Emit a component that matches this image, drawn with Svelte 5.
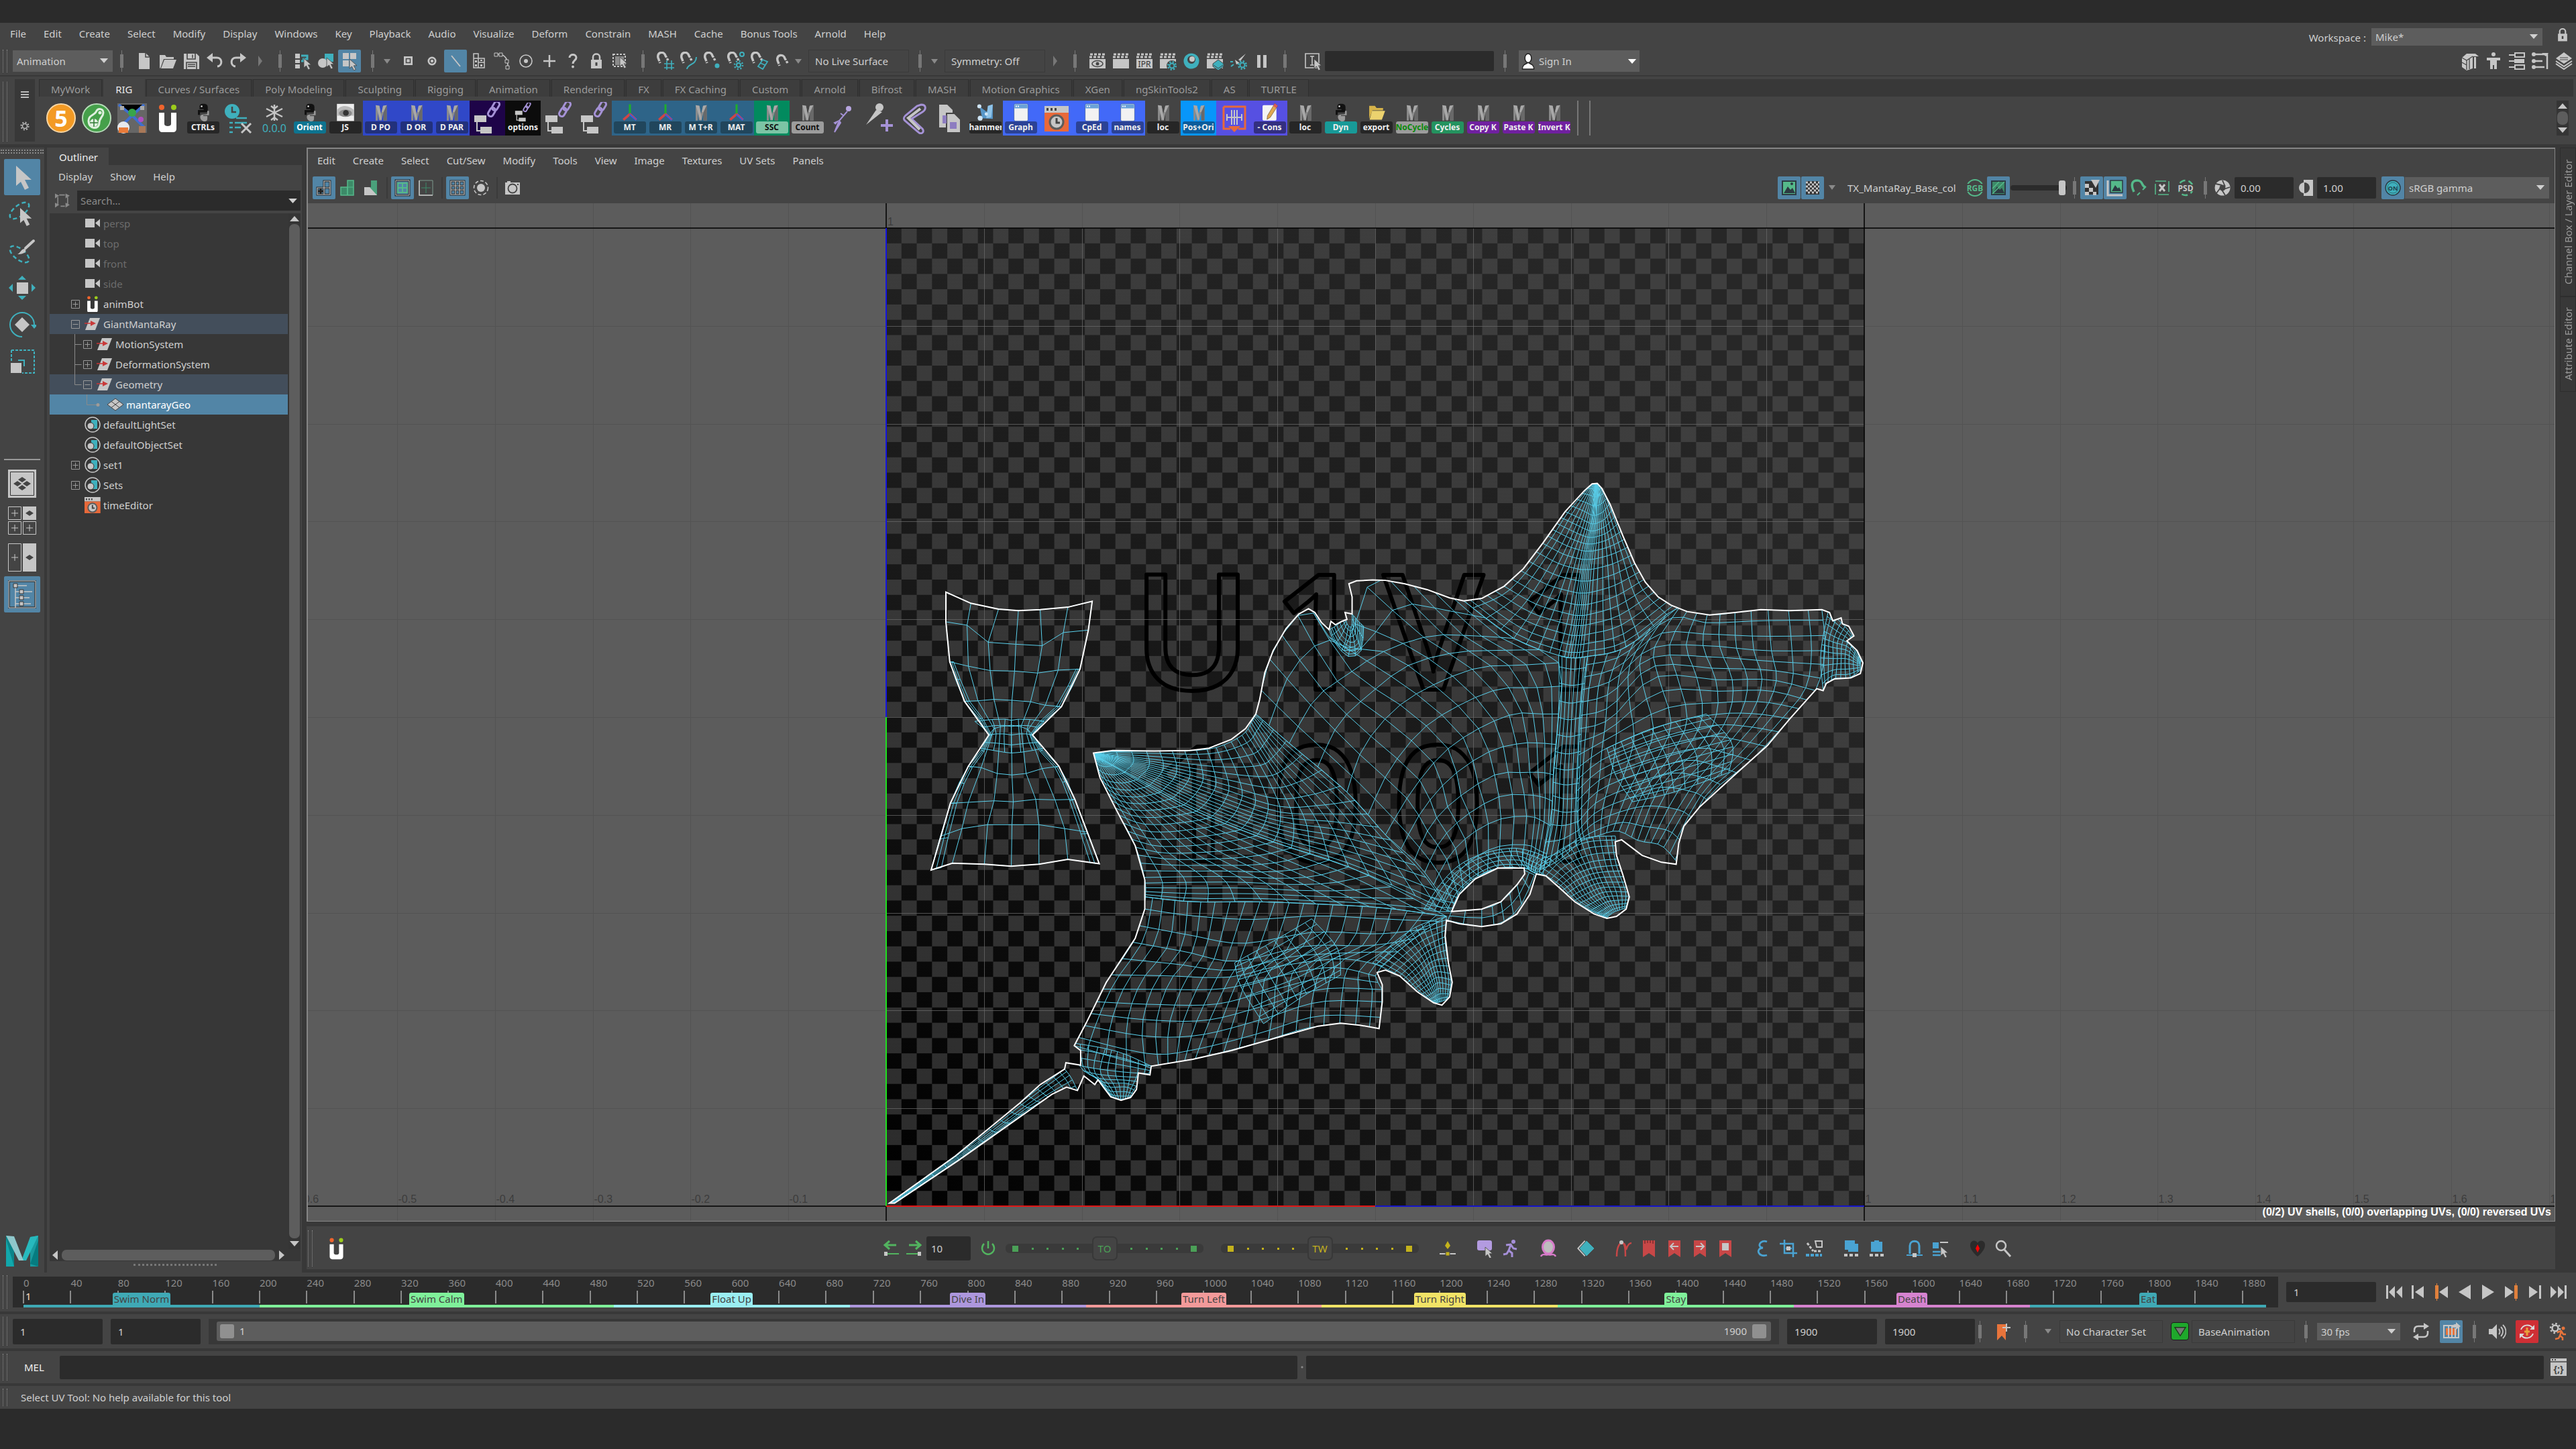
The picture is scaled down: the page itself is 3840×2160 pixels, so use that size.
<script>
  const W = "#c6c6c6";
  const T = "#3fb0bd";
  const G = "#55b98a";

  // shared bits of the icon set, all drawn on a 28 x 28 box
  const cursor = (x, y) => `<path transform="translate(${x} ${y})" d="M0 0v14l3.500-3 3 6 2.800-1.400-3-5.800H11z" fill="${W}" stroke="#444" stroke-width=".8"/>`;
  const magnet = `<path d="M6 17 3 9C1 0 12-1 14 6l4 7" fill="none" stroke="${W}" stroke-width="3.500"/><path d="M3.500 15.500l5-1.800M13.500 10.500l4.500-2" stroke="#444" stroke-width="1.500"/>`;
  const clapper = `<path d="M2 11h24v14H2z" fill="${W}"/><path d="M2 8h24M3 4h23" stroke="${W}" stroke-width="3" stroke-dasharray="4 2"/>`;
  const gear = (x, y) => `<g transform="translate(${x} ${y})" fill="none" stroke="${T}"><circle r="3.500" stroke-width="2"/><circle r="5.800" stroke-width="2.400" stroke-dasharray="2.300 2.250"/></g>`;
  const bolt = `<path d="M5 2h18v25l-9-6-9 6z" fill="#c84747"/>`;
  const film = `<path d="M3 5h22v18H3z" fill="none" stroke="${W}" stroke-width="2"/>`;

  const icons = {
    newScene: `<path d="M6 2h10l6 6v18H6z" fill="${W}"/><path d="M16 2v6h6" fill="none" stroke="#444" stroke-width="1.500"/>`,
    open: `<path d="M2 24V5h8l2 3h11v3H8L3 25z" fill="${W}"/><path d="M9 12h18l-5 13H4z" fill="${W}"/>`,
    save: `<path d="M3 3h19l4 4v19H3z" fill="${W}"/><path d="M8 3v8h12V3M7 26V16h15v10" fill="none" stroke="#444" stroke-width="1.600"/><path d="M9 19h11M9 22h11M16 4.500v5" stroke="#444" stroke-width="1.500"/>`,
    undo: `<path d="M8 9h9c9 0 9 12 1 13" fill="none" stroke="${W}" stroke-width="3"/><path d="M2 9l9-7v14z" fill="${W}"/>`,
    redo: `<path d="M20 9h-9c-9 0-9 12-1 13" fill="none" stroke="${W}" stroke-width="3"/><path d="M26 9l-9-7v14z" fill="${W}"/>`,
    selHier: `<path d="M3 3h7v7H3zM3 12h7v5H3zM3 19h7v6H3z" fill="${W}"/><path d="M12 6h9v5h-7M12 14h5" fill="none" stroke="${T}" stroke-width="3"/>${cursor(16, 10)}`,
    selObj: `<path d="M12 3h13v12H12z" fill="${T}"/><circle cx="9" cy="17" r="7" fill="${W}"/>${cursor(15, 9)}`,
    selComp: `<path d="M4 2h9v9H4zM15 2h9v9h-9zM4 13h9v9H4z" fill="${W}"/>${cursor(14, 11)}`,
    maskPoint: `<path d="M7 7h13v13H7z" fill="${W}"/><path d="M10.500 10.500h6v6h-6z" fill="none" stroke="#444" stroke-width="1.500"/>`,
    maskParm: `<circle cx="14" cy="14" r="6.500" fill="${W}"/><circle cx="14" cy="14" r="3" fill="${W}" stroke="#444" stroke-width="1.500"/>`,
    maskLine: `<path d="M8 6l13 16" stroke="${W}" stroke-width="1.800"/>`,
    maskFace: `<path d="M6 3h7v21H6zM6 10h16v14H6zM13 16h9" fill="none" stroke="${W}" stroke-width="1.500"/><path d="M8 13h3v3H8zM16 12h3v2h-3zM8 19h3v3H8zM16 19h3v3h-3z" fill="${W}"/>`,
    maskHull: `<path d="M5 4h5c8 1 12 8 12 18" fill="none" stroke="${W}" stroke-width="1.600"/><path d="M2 2h5v5H2zM9 2h5v5H9zM18 12h5v5h-5zM19 21h5v5h-5z" fill="#444" stroke="${W}"/>`,
    maskPivot: `<circle cx="14" cy="14" r="9" fill="none" stroke="${W}" stroke-width="1.600"/><circle cx="14" cy="14" r="3" fill="${W}"/>`,
    maskPlus: `<path d="M14 5v18M5 14h18" stroke="${W}" stroke-width="2.500"/>`,
    maskHelp: `<path d="M9 9c0-6 10-6 10 0 0 4-5 4-5 9" fill="none" stroke="${W}" stroke-width="3"/><circle cx="14" cy="22.500" r="1.900" fill="${W}"/>`,
    lock: `<path d="M6 12h16v13H6z" fill="${W}"/><path d="M9 13V8c0-6 10-6 10 0v5" fill="none" stroke="${W}" stroke-width="2.500"/><path d="M14 16v5" stroke="#444" stroke-width="3"/>`,
    highlight: `<path d="M4 4h18v18H4z" fill="none" stroke="${W}" stroke-width="2" stroke-dasharray="3 2"/><path d="M7 7h13v13H7z" fill="#8a8a8a"/>${cursor(14, 8)}`,
    snapGrid: magnet + `<path d="M12 18h15M12 24h15M16 13v14M23 13v14" stroke="${T}" stroke-width="1.600"/>`,
    snapCurve: magnet + `<path d="M11 26c1-8 14-6 14-18" fill="none" stroke="${T}" stroke-width="2"/>`,
    snapPoint: magnet + `<circle cx="21" cy="21" r="3.500" fill="${T}"/>`,
    snapCenter: magnet + `<circle cx="23" cy="4" r="3" fill="none" stroke="${T}" stroke-width="2"/><circle cx="18" cy="20" r="3" fill="none" stroke="${T}" stroke-width="2"/><circle cx="18" cy="20" r="6" fill="none" stroke="${T}" stroke-width="2.500" stroke-dasharray="2 2.700"/>`,
    snapPlane: magnet + `<path d="M12 22l7-10 7 3-7 11zM15.500 17l7 3" fill="none" stroke="${T}" stroke-width="1.800"/>`,
    snapLive: `<g transform="translate(3 4)">${magnet}</g>`,
    render: clapper + `<ellipse cx="14" cy="18" rx="8" ry="4.500" fill="none" stroke="#444" stroke-width="1.500"/><circle cx="14" cy="18" r="2.500" fill="#444"/>`,
    renderSeq: clapper,
    ipr: clapper + `<text x="14" y="23" text-anchor="middle" font-size="12" fill="#333">IPR</text>`,
    renderGear: clapper + `<circle cx="20" cy="21" r="8" fill="#444"/>` + gear(20, 21),
    hyper: `<circle cx="14" cy="14" r="11.500" fill="${T}"/><circle cx="14" cy="12" r="6" fill="#444"/><circle cx="15" cy="11" r="4" fill="${W}"/>`,
    renderLayer: clapper + `<path d="M19 12l8 6v4l-8 6-8-6v-4z" fill="${T}" stroke="#444"/><path d="M12 20l7 5 7-5" fill="none" stroke="#444"/>`,
    light: `<path d="M25 3l-11 9 3 2zM9 12l7 5-5 2z" fill="${W}"/><path d="M2 15h4M3 22l4-3" stroke="${T}" stroke-width="2"/>` + gear(20, 20),
    pause: `<path d="M7 5h5v19H7zM16 5h5v19h-5z" fill="${W}"/>`,
    rename: `<path d="M3 3h20v21H3z" fill="none" stroke="${W}" stroke-width="1.600"/><path d="M10 7h6M13 7v13M10 20h6" stroke="${W}" stroke-width="1.600"/>${cursor(16, 11)}`,
    cube: `<path d="M2 9l7-6h13l5 4h-9v18l-9 3-7-5z" fill="${W}"/><path d="M2 9l7 4 9-6M9 13v14M13 11v15M2 16l7 4" stroke="#444" stroke-width="1.300" fill="none"/><path d="M20 8h3v17h-3z" fill="${W}"/>`,
    human: `<circle cx="14" cy="4" r="3" fill="${W}"/><path d="M4 9h20v4h-5v13h-4v-6h-2v6H9V13H4z" fill="${W}"/>`,
    chan: `<path d="M2 5h8M2 14h8M2 23h8" stroke="${W}" stroke-width="2"/><path d="M11 2h14v6H11zM11 20h14v6H11z" fill="none" stroke="${W}" stroke-width="2"/><path d="M10 11h15v6H10z" fill="${W}"/>`,
    attr: `<path d="M2 4h22v22M5 14h12M5 23h15" stroke="${W}" stroke-width="2.500" fill="none"/><circle cx="4" cy="4" r="3" fill="${W}"/><circle cx="4" cy="14" r="3" fill="${W}"/><circle cx="4" cy="23" r="3" fill="${W}"/><path d="M16 2h10l-4 5z" fill="${W}"/>`,
    layers: `<path d="M14 1l12 9-12 8L2 10z" fill="${W}"/><path d="M2 14l12 8 12-8M2 18l12 8 12-8" fill="none" stroke="${W}" stroke-width="2"/><path d="M8 9h12M8 12h12" stroke="#444"/>`,

    uvWire: `<path d="M4 14h10v10H4zM14 4h9v20h-9zM14 14h9M9 14v10M4 19h10" fill="none" stroke="#222" stroke-width="3"/><path d="M4 14h10v10H4zM14 4h9v20h-9zM14 14h9" fill="none" stroke="${W}" stroke-width="1.200"/>`,
    uvShade: `<path d="M4 13h10v12H4zM14 3h9v22h-9z" fill="#3d8a68" stroke="${G}" stroke-width="1.500"/><path d="M14 13h9M14 13v12" stroke="${G}"/>`,
    uvDist: `<path d="M4 13h10V3h9v22H4z" fill="#4aa07b"/><path d="M4 13h8l11 12H4z" fill="${W}"/>`,
    uvIso: `<path d="M4 3h20v22H4z" fill="none" stroke="#222" stroke-width="3"/><path d="M4 3h20v22H4z" fill="none" stroke="${W}"/><path d="M7 7h14v14H7zM14 7v14M7 14h14" fill="none" stroke="${G}" stroke-width="2"/>`,
    uvDim: `<path d="M4 3h20v22H4z" fill="none" stroke="#7d9a8e"/><path d="M4 3v22h20" fill="none" stroke="${W}" stroke-width="1.500"/><path d="M14 6v16M7 14h14" stroke="#3d8a68"/>`,
    uvGrid: `<path d="M4 4h20v20H4zM11 4v20M17 4v20M4 11h20M4 17h20" fill="none" stroke="#222" stroke-width="3"/><path d="M4 4h20v20H4zM11 4v20M17 4v20M4 11h20M4 17h20" fill="none" stroke="${W}" stroke-width="1.200"/>`,
    uvIsolate: `<circle cx="14" cy="14" r="10.500" fill="none" stroke="${W}" stroke-width="1.600" stroke-dasharray="5 3"/><circle cx="14" cy="14" r="6" fill="${W}"/>`,
    camera: `<path d="M3 6h3V4h5v2h14v18H3z" fill="${W}"/><circle cx="14" cy="15" r="6.500" fill="none" stroke="#444" stroke-width="1.800"/><path d="M21 9h2" stroke="#444" stroke-width="2"/>`,
    image: `<path d="M4 4h20v20H4z" fill="${G}" stroke="#2c3a42" stroke-width="2"/><path d="M6 22l6-10 4 5 3-3 4 8z" fill="#2c3a42"/><circle cx="18" cy="8" r="2" fill="#2c3a42"/>`,
    checker: `<path d="M4 4h20v20H4z" fill="#333"/><path d="M4 6h20M4 12h20M4 18h20" stroke="${W}" stroke-width="3" stroke-dasharray="3 3"/><path d="M7 9h17M7 15h17M7 21h17" stroke="${W}" stroke-width="3" stroke-dasharray="3 3"/>`,
    rgb: `<circle cx="14" cy="14" r="12" fill="none" stroke="${G}" stroke-width="2"/><path d="M0 8h28v12H0z" fill="#444"/><text x="14" y="18.500" text-anchor="middle" font-size="12" font-weight="700" fill="${G}">RGB</text>`,
    imageDim: `<path d="M4 4h20v20H4z" fill="#3d8a68" stroke="#2c3a42" stroke-width="2"/><path d="M6 22l6-10 4 5 3-3 4 8z" fill="#2c3a42"/><path d="M5 23L23 5M5 15L15 5" stroke="${G}" stroke-width="1.500"/>`,
    pixelSnap: `<path d="M4 4h20v20H4z" fill="#333"/><path d="M4 8h6v6H4zM10 14h6v6h-6zM4 20h6v5H4zM16 20h5v5h-5zM13 2h13l-6 12z" fill="${W}"/>`,
    imageFrame: `<path d="M3 3v22h22" fill="none" stroke="${W}" stroke-width="3"/><path d="M7 3h18v18H7z" fill="${G}" stroke="#2c3a42" stroke-width="1.500"/><path d="M9 19l5-9 4 5 2-2 3 6z" fill="#2c3a42"/>`,
    uvMagnet: `<path d="M7 20C2 9 4 3 12 3c9 0 6 9 12 10" fill="none" stroke="${G}" stroke-width="3.500"/><path d="M12 25l4-4M20 17l5-5" stroke="${G}" stroke-width="2"/>`,
    bake: `<path d="M4 4h20v20H4z" fill="none" stroke="${G}" stroke-width="1.600" stroke-dasharray="16 4"/><path d="M10 9l8 10M18 9l-8 10" stroke="${W}" stroke-width="3"/>`,
    psd: `<circle cx="14" cy="14" r="11" fill="none" stroke="${G}" stroke-width="2.500" stroke-dasharray="9 5"/><path d="M0 9h28v10H0z" fill="#444"/><text x="14" y="18.500" text-anchor="middle" font-size="12" font-weight="700" fill="${W}">PSD</text>`,
    aperture: `<circle cx="14" cy="14" r="8" fill="none" stroke="${W}" stroke-width="7"/><path d="M14 3l4 9M25 13l-9 3M18 25l-5-8M5 22l6-8M4 8l9 2" stroke="#444" stroke-width="1.800"/>`,
    contrast: `<path d="M12 2h14v24H12z" fill="${W}"/><path d="M13 6a8 8 0 0 0 0 16z" fill="${W}"/><path d="M13 6a8 8 0 0 1 0 16z" fill="#444"/>`,
    on: `<circle cx="14" cy="14" r="11" fill="${T}" stroke="#2c3a42" stroke-width="1.500"/><circle cx="14" cy="14" r="8" fill="none" stroke="#2c6f78"/><text x="14" y="17.500" text-anchor="middle" font-size="9" font-weight="700" fill="#21434c">ON</text>`,

    keyPrev: `<path d="M5 9h17M12 3L5 9l7 6" fill="none" stroke="#52b45f" stroke-width="3"/><path d="M9 22h17" stroke="#52b45f" stroke-width="2"/><path d="M4 19h5v6H4z" fill="${W}"/>`,
    keyNext: `<path d="M23 9H6M16 3l7 6-7 6" fill="none" stroke="#52b45f" stroke-width="3"/><path d="M2 22h17" stroke="#52b45f" stroke-width="2"/><path d="M19 19h5v6h-5z" fill="${W}"/>`,
    power: `<path d="M8 7a9 9 0 1 0 12 0M14 3v11" fill="none" stroke="#52b45f" stroke-width="2.500"/>`,
    tween: `<path d="M14 3l4 7-4 5-4-5z" fill="#c4b21c"/><path d="M2 22h24" stroke="${W}" stroke-width="2"/><path d="M11 19h6v6h-6z" fill="#c4b21c" stroke="#444"/>`,
    selectSet: `<rect x="2" y="2" width="22" height="15" rx="3" fill="#b39be0"/>${cursor(14, 12)}`,
    runner: `<circle cx="18" cy="4" r="3" fill="#a58fd8"/><path d="M7 9l7-1 4 6 5 1M14 9l-3 8 5 4v6M11 17l-3 5-5 1" fill="none" stroke="#a58fd8" stroke-width="3"/>`,
    mirror: `<ellipse cx="14" cy="12" rx="8.500" ry="10" fill="#bdbdbd" stroke="#d77bc9" stroke-width="3"/><path d="M3 26c3-6 8-1 11-3 3 2 8-3 11 3" fill="none" stroke="#d77bc9" stroke-width="2.500"/>`,
    diamond: `<path d="M12 2l11 12-11 12L1 14z" fill="${W}"/><path d="M15 2l12 12-12 12L4 14z" fill="${T}" stroke="#444"/>`,
    curve: `<path d="M4 26C4 12 8 6 12 6s5 8 5 20M12 6c5 0 5 5 6 10 2-7 4-10 8-10" fill="none" stroke="#c84747" stroke-width="2.500"/><circle cx="11" cy="5" r="3" fill="${W}"/>`,
    markAll: bolt + `<path d="M8 2v5M12 2v4M16 2v4M20 2v5" stroke="#7c2c2c" stroke-width="1.500"/>`,
    markPrev: bolt + `<path d="M20 11H8M13 6l-5 5 5 5" fill="none" stroke="${W}" stroke-width="2"/>`,
    markNext: bolt + `<path d="M8 11h12M15 6l5 5-5 5" fill="none" stroke="${W}" stroke-width="2"/>`,
    markBox: bolt + `<path d="M9 6h10v11H9z" fill="${W}"/>`,
    epsilon: `<path d="M20 4C10 0 4 12 14 13 2 14 7 28 20 24" fill="none" stroke="#4aa3d2" stroke-width="2.800"/>`,
    crop: `<path d="M8 1v20h19M1 7h20v20M10 14h9" fill="none" stroke="#4aa3d2" stroke-width="2.500"/><path d="M11 11h6v6h-6z" fill="${W}"/>`,
    nudge: `<path d="M2 24h24" stroke="#4aa3d2" stroke-width="4" stroke-dasharray="5 2"/><path d="M14 18h12M4 6l9 12" stroke="${W}" stroke-width="3" stroke-dasharray="4 2"/><path d="M16 3h10v9h-8z" fill="none" stroke="${W}" stroke-width="2"/>`,
    copy: `<path d="M4 2h15v5h5v12H9v-3H4z" fill="#4aa3d2"/><path d="M3 24h23" stroke="${W}" stroke-width="4" stroke-dasharray="5 3"/>`,
    paste: `<path d="M5 4h5V2h7v2h5v15H5z" fill="#4aa3d2"/><path d="M3 24h23" stroke="${W}" stroke-width="4" stroke-dasharray="5 3"/>`,
    arch: `<path d="M7 22V10c0-9 14-9 14 0v12" fill="none" stroke="#4aa3d2" stroke-width="3"/><path d="M2 24h24" stroke="#4aa3d2" stroke-width="2"/><path d="M11 21h6v6h-6z" fill="${W}"/>`,
    picker: `<path d="M3 5h9v9H3z" fill="#4aa3d2"/><path d="M3 19h12M3 24h12" stroke="#4aa3d2" stroke-width="2.500"/><path d="M14 5h12" stroke="${W}" stroke-width="2"/>${cursor(15, 11)}`,
    heart: `<path d="M14 26C2 16 2 9 4 5c3-4 8-3 10 1 2-4 7-5 10-1 2 4 2 11-10 21z" fill="#2b2b2b"/><path d="M14 8l3 6-3 6-3-6z" fill="#f00"/>`,
    search: `<circle cx="11" cy="10" r="7" fill="none" stroke="${W}" stroke-width="2.500"/><path d="M16 16l9 10" stroke="${W}" stroke-width="3"/>`,

    goStart: `<path d="M2 4h3v20H2z" fill="${W}"/><path d="M15 5v18L6 14zM26 5v18l-9-9z" fill="${W}"/>`,
    stepBack: `<path d="M5 4h3v20H5z" fill="${W}"/><path d="M23 5v18l-13-9z" fill="${W}"/>`,
    keyBack: `<path d="M5 4h5v20H5zM7 1h1v26H7z" fill="#e0803c"/><path d="M24 5v18l-13-9z" fill="${W}"/>`,
    playBack: `<path d="M23 3v22L5 14z" fill="${W}"/>`,
    play: `<path d="M5 3v22l18-11z" fill="${W}"/>`,
    keyFwd: `<path d="M18 4h5v20h-5zM20 1h1v26h-1z" fill="#e0803c"/><path d="M4 5v18l13-9z" fill="${W}"/>`,
    stepFwd: `<path d="M20 4h3v20h-3z" fill="${W}"/><path d="M5 5v18l13-9z" fill="${W}"/>`,
    goEnd: `<path d="M23 4h3v20h-3z" fill="${W}"/><path d="M2 5v18l9-9zM13 5v18l9-9z" fill="${W}"/>`,
    bookmark: `<path d="M6 3h13v24l-6-7-7 7z" fill="#e8743b"/><path d="M20 2v12M14 8h12" stroke="${W}" stroke-width="2"/>`,
    loop: `<path d="M4 15v-3c0-4 2-6 6-6h10M24 13v3c0 4-2 6-6 6H8" fill="none" stroke="${W}" stroke-width="2.500"/><path d="M18 1l8 5-8 5zM10 17l-8 5 8 5z" fill="${W}"/>`,
    cache: film + `<path d="M6 9h16v10H6z" fill="#e8743b"/><path d="M10 5v18M15 5v18M20 9v14" stroke="${W}" stroke-width="2"/><path d="M14 8c2-5 5-5 7-5V0l7 6-7 5V8z" fill="${W}"/>`,
    sound: `<path d="M2 10h5l7-7v22l-7-7H2z" fill="${W}"/><path d="M17 10c2 2 2 6 0 8M20 7c4 4 4 10 0 14M23 4c6 6 6 14 0 20" fill="none" stroke="${W}" stroke-width="1.800"/>`,
    autoKey: `<path d="M5 11a10 10 0 0 1 17-3M23 17a10 10 0 0 1-17 3" fill="none" stroke="#d9d9d9" stroke-width="2"/><path d="M25 4v7h-7zM3 24v-7h7z" fill="#d9d9d9"/><path d="M14 8v12M10 14h8" stroke="#e8a13b" stroke-width="3"/>`,
    prefs: `<circle cx="9" cy="9" r="4.500" fill="none" stroke="${W}" stroke-width="2.500"/><circle cx="9" cy="9" r="7" fill="none" stroke="${W}" stroke-width="2.500" stroke-dasharray="2.500 3"/><circle cx="21" cy="9" r="2.500" fill="#e8743b"/><path d="M12 15l6-2 3 5h4M18 14l-2 6 4 3v4M16 20l-2 4-5 1" fill="none" stroke="#e8743b" stroke-width="2.500"/>`,
    script: `<path d="M2 1h24v26H2z" fill="${W}"/><path d="M2 6h24" stroke="#444" stroke-width="1.500"/><path d="M4 3h2M8 3h2" stroke="#444" stroke-width="2"/><text x="14" y="22" text-anchor="middle" font-size="14" font-weight="700" fill="#444">&#123;;&#125;</text>`
  };

  // shelf artwork on a 48 x 48 box
  const mayaM = `<path d="M11 44V6l9 2 4 20 5-20 9-2v38h-8V24l-5 20-6-1-3-17v18z" fill="#8c8c8c"/><path d="M11 6l9 2 6 34-4 0zM38 6l-9 2-3 14 4 2z" fill="#a9a9a9"/><path d="M30 24l8-18v38h-8z" fill="#696969"/>`;
  const python = `<path d="M24 3c-8 0-9 3-9 8v5h10v2H11v12h5v-6h14c4 0 5-3 5-6v-7c0-5-3-8-11-8z" fill="#111"/><path d="M25 46c8 0 9-3 9-8v-5H24v-2h14V20h-4v7c-2 3-14 1-16 4-3 3-2 12 7 15z" fill="#9a9a9a"/><circle cx="20" cy="9" r="2" fill="#eee"/>`;
  const axis = `<path d="M24 28V4" stroke="#1fae2c" stroke-width="5"/><path d="M24 28L8 42" stroke="#d04545" stroke-width="6"/><path d="M24 28l16 14" stroke="#3b5be0" stroke-width="6"/><path d="M24 26l8 7 8 9" fill="none" stroke="#d04545" stroke-width="2"/>`;
  const node = `<path d="M4 20h18v10H4z" fill="${W}"/><path d="M8 30v13h8" fill="none" stroke="${W}" stroke-width="2"/><path d="M13 37h17v10H13z" fill="${W}"/><g fill="none" stroke="#a592d6" stroke-width="3"><rect x="-4" y="-7" width="8" height="14" rx="4" transform="translate(30 15) rotate(30)"/><rect x="-4" y="-7" width="8" height="14" rx="4" transform="translate(36 6) rotate(30)"/></g>`;
  const win = `<rect x="7" y="3" width="34" height="42" rx="3" fill="#f2f2f2" stroke="#274b8a"/><path d="M8 4h32v10H8z" fill="#6aa2d8"/><path d="M11 9h3M16 9h3" stroke="#fff" stroke-width="3"/>`;
  const editor = `<path d="M6 6h36v10H6z" fill="${W}"/><path d="M6 16h36v28H6z" fill="#e8693a"/><path d="M9 11h3M15 11h3M21 11h3" stroke="#444" stroke-width="4"/><circle cx="24" cy="30" r="10" fill="${W}" stroke="#5c5c5c" stroke-width="3"/><path d="M24 24v7h5" fill="none" stroke="#444" stroke-width="3"/>`;
  const animbot = `<path d="M11 16h8v17c0 4 10 4 10 0V16h8v24c0 3-2 5-5 5H16c-3 0-5-2-5-5z" fill="#fff"/><circle cx="15" cy="8" r="4" fill="#f0642d"/><circle cx="33" cy="8" r="4" fill="#9ccc1c"/>`;
  const art = {
    mayaM, python, axis, node, win, editor, animbot,
    five: `<circle cx="24" cy="24" r="21" fill="#f39a24" stroke="#f8d7a5" stroke-width="2"/><text x="24" y="37" text-anchor="middle" font-size="34" font-weight="700" fill="#fff">5</text>`,
    green: `<circle cx="24" cy="24" r="21" fill="#45a04a" stroke="#b7dcb9" stroke-width="2"/><path d="M12 28c0-8 8-8 11-13 3-7 11-5 11 1s-6 8-6 15c0 11-16 10-16-3z" fill="none" stroke="#dff0df" stroke-width="3"/><circle cx="20" cy="31" r="6" fill="#dff0df"/><path d="M14 31h12M20 25v12" stroke="#2f7a34" stroke-width="1.500"/><circle cx="29" cy="16" r="2.500" fill="#dff0df"/>`,
    people: `<path d="M2 2h44v44H2z" fill="#666"/><path d="M4 4l20 16L42 4M24 20L8 36M24 20l18 18" stroke="#3d6fd0" stroke-width="4"/><circle cx="24" cy="16" r="6" fill="#39a54a"/><circle cx="11" cy="38" r="9" fill="#e6e9ee"/><path d="M4 38h14v8H4z" fill="#e87b3a"/><path d="M34 36h10v10H34z" fill="#a87858"/><path d="M6 6h6v6H6zM36 6h6v6h-6z" fill="#aaa"/><circle cx="37" cy="26" r="4" fill="#b04fc0"/>`,
    clock: `<circle cx="14" cy="14" r="11" fill="${T}"/><path d="M14 7v8h6" stroke="#444" stroke-width="2.500" fill="none"/><path d="M20 24h16M10 31h5M18 31h18M10 38h5M18 38h9M10 45h5" stroke="${T}" stroke-width="2.500"/><path d="M28 32l14 14M42 32L28 46" stroke="${W}" stroke-width="3"/>`,
    freeze: `<path d="M24 4v24M12 10l24 12M36 10L12 22M19 6l5 4 5-4M19 27l5-4 5 4" stroke="${W}" stroke-width="2.500" fill="none"/><text x="24" y="45" text-anchor="middle" font-size="16" fill="${T}">0.0.0</text>`,
    eye: `<path d="M3 3h42v42H3z" fill="#eee"/><path d="M3 18c12-14 28-12 42 0v14H3z" fill="#bbb"/><ellipse cx="24" cy="26" rx="16" ry="9" fill="#8a8a8a"/><circle cx="25" cy="25" r="7" fill="#333"/>`,
    bone: `<circle cx="32" cy="10" r="4" fill="#b7a6e0"/><path d="M30 14L18 28l-7 3 2 2M17 30l-6 15 9-14-2-3M24 20l-4-3" fill="#a592d6" stroke="#a592d6" stroke-width="2"/>`,
    boneAdd: `<circle cx="25" cy="8" r="6" fill="${W}"/><path d="M20 12l9 3L5 34z" fill="${W}"/><path d="M36 26v18M27 35h18" stroke="#a592d6" stroke-width="4"/>`,
    joint: `<path d="M34 4c8 0 8 7 2 11L20 25l16 15c4 5-2 9-6 5L10 28c-3-3-2-5 1-8L28 6z" fill="none" stroke="#a592d6" stroke-width="3"/><path d="M33 10L15 24l17 17" fill="none" stroke="${W}" stroke-width="4"/>`,
    dup: `<path d="M8 4h12l8 8v26H8z" fill="${W}"/><path d="M19 17h12l9 9v20H19z" fill="${W}" stroke="#444" stroke-width="2"/><path d="M13 20h6v12h-6zM24 30h10v10H24z" fill="#8d7dc0"/>`,
    rigBlue: `<path d="M10 10l6 28 26 2V6l-12 3-2 14z" fill="#5796c8"/><path d="M30 8l12-4-4 32-12 2z" fill="#8fc3e8"/><circle cx="9" cy="9" r="5" fill="#cfe5f5"/><circle cx="11" cy="38" r="6" fill="#cfe5f5"/><circle cx="26" cy="28" r="4" fill="#cfe5f5"/>`,
    clamp: `<path d="M8 7h32v33H30M18 40H8V7" fill="none" stroke="#e8693a" stroke-width="3"/><path d="M15 36l9 9 9-9z" fill="#e8693a"/><path d="M20 12v22M24 12v22M28 12v22M13 18v10M35 18v10M13 23h22" stroke="${W}" stroke-width="2"/>`,
    note: `<rect x="6" y="6" width="34" height="38" rx="3" fill="#f4f4f4"/><path d="M36 2l7 6-18 28-8 5 1-9z" fill="#e0a850" stroke="#57422a"/><path d="M36 2l7 6-4 5-7-5z" fill="#d75a5a"/>`,
    folder: `<path d="M6 8h14l4 5h16v6H14L6 40z" fill="#d6b34a"/><path d="M13 20h32l-8 22H7z" fill="#ecd26e"/>`
  };

  const menus = ["File", "Edit", "Create", "Select", "Modify", "Display", "Windows", "Key", "Playback", "Audio", "Visualize", "Deform", "Constrain", "MASH", "Cache", "Bonus Tools", "Arnold", "Help"];
  const uvMenus = ["Edit", "Create", "Select", "Cut/Sew", "Modify", "Tools", "View", "Image", "Textures", "UV Sets", "Panels"];
  const shelfTabs = ["MyWork", "RIG", "Curves / Surfaces", "Poly Modeling", "Sculpting", "Rigging", "Animation", "Rendering", "FX", "FX Caching", "Custom", "Arnold", "Bifrost", "MASH", "Motion Graphics", "XGen", "ngSkinTools2", "AS", "TURTLE"];

  // icon, label, label colour, label background, tile background
  const shelf = [
    ["five"], ["green"], ["people"], ["animbot"],
    ["python", "CTRLs"], ["clock"], ["freeze"], ["python", "Orient", "#fff", "#0e7490"],
    ["eye", "JS"],
    ["mayaM", "D PO", "#eee", "#22317c", "#3048c8"], ["mayaM", "D OR", "#eee", "#22317c", "#3048c8"], ["mayaM", "D PAR", "#eee", "#22317c", "#3048c8"],
    ["node", "", "", "", "#1e0448"], ["node", "options", "#eee", "transparent", "#0c0c0c"], ["node"], ["node"],
    ["axis", "MT", "#eee", "#21465c", "#2e6488"], ["axis", "MR", "#eee", "#21465c", "#2e6488"], ["mayaM", "M T+R", "#eee", "#21465c", "#2e6488"], ["axis", "MAT", "#eee", "#21465c", "#2e6488"],
    ["mayaM", "SSC", "#111", "#7cc4a5", "#028a5e"], ["mayaM", "Count", "#111", "#9c9c9c"],
    ["bone"], ["boneAdd"], ["joint"], ["dup"], ["rigBlue", "hammer"],
    ["win", "Graph", "#eee", "#2b4296", "#4269f8"], ["editor", "", "", "", "#4269f8"], ["win", "CpEd", "#eee", "#2b4296", "#4269f8"], ["win", "names", "#eee", "#2b4296", "#4269f8"],
    ["mayaM", "loc"], ["mayaM", "Pos+Ori", "#eee", "#0b5c9c", "#0896fa"],
    ["clamp", "", "", "", "#5650e2"], ["note", "- Cons", "#eee", "#332f80", "#5650e2"],
    ["mayaM", "loc"], ["python", "Dyn", "#eee", "#189a98"], ["folder", "export"],
    ["mayaM", "NoCycle", "#0a8a0a", "#9c9c9c"], ["mayaM", "Cycles", "#eee", "#24935f"],
    ["mayaM", "Copy K", "#eee", "#7020a0"], ["mayaM", "Paste K", "#eee", "#7020a0"], ["mayaM", "Invert K", "#eee", "#7020a0"]
  ];

  const statusFile = ["newScene", "open", "save", "undo", "redo"];
  const statusMode = ["selHier", "selObj", "selComp"];
  const statusMask = ["maskPoint", "maskParm", "maskLine", "maskFace", "maskHull", "maskPivot", "maskPlus", "maskHelp", "lock", "highlight"];
  const statusSnap = ["snapGrid", "snapCurve", "snapPoint", "snapCenter", "snapPlane", "snapLive"];
  const statusRender = ["render", "renderSeq", "ipr", "renderGear", "hyper", "renderLayer", "light", "pause"];
  const sidebarIcons = ["cube", "human", "chan", "attr", "layers"];
  const playback = ["goStart", "stepBack", "keyBack", "playBack", "play", "keyFwd", "stepFwd", "goEnd"];
  const botGroups = [["tween"], ["selectSet", "runner"], ["mirror"], ["diamond"], ["curve", "markAll", "markPrev", "markNext", "markBox"], ["epsilon", "crop", "nudge"], ["copy", "paste"], ["arch", "picker"], ["heart", "search"]];
  const sliders = [{ name: "TO", tone: "green" }, { name: "TW", tone: "yellow" }];

  const camIcon = `<path d="M1 5h14v13H1zM16 11.500l7-6v12z" fill="${W}"/>`;
  const groupIcon = `<path d="M8 3h15l-7 18H1z" fill="${W}"/><path d="M0 11h10" stroke="#c33" stroke-width="1.500"/><path d="M9 7l8 4-8 4z" fill="#c83a3a"/>`;
  const setIcon = `<circle cx="12" cy="12" r="11" fill="none" stroke="${W}" stroke-width="1.500"/><path d="M10 5h9v13h-9z" fill="${T}"/><circle cx="9" cy="14" r="5" fill="${W}" stroke="#383838"/>`;
  const meshIcon = `<path d="M12 3l12 9-12 9-12-9z" fill="${W}" stroke="#444"/><path d="M6 7.500l12 9M18 7.500l-12 9" stroke="#444"/>`;
  const small = (s) => `<g transform="scale(.5)">${s}</g>`;
  const tree = [
    { name: "persp", icon: camIcon, dim: true },
    { name: "top", icon: camIcon, dim: true },
    { name: "front", icon: camIcon, dim: true },
    { name: "side", icon: camIcon, dim: true },
    { name: "animBot", icon: `<g transform="translate(-2.500 -2) scale(.6)">${animbot}</g>`, box: "+" },
    { name: "GiantMantaRay", icon: groupIcon, box: "-", state: "parent" },
    { name: "MotionSystem", icon: groupIcon, box: "+", depth: 1 },
    { name: "DeformationSystem", icon: groupIcon, box: "+", depth: 1 },
    { name: "Geometry", icon: groupIcon, box: "-", depth: 1, state: "parent", last: true },
    { name: "mantarayGeo", icon: meshIcon, depth: 2, state: "selected" },
    { name: "defaultLightSet", icon: setIcon },
    { name: "defaultObjectSet", icon: setIcon },
    { name: "set1", icon: setIcon, box: "+" },
    { name: "Sets", icon: setIcon, box: "+" },
    { name: "timeEditor", icon: `<g transform="translate(-4 -4) scale(.66)">${editor}</g>` }
  ];

  // tool box, 42 x 42
  const dash = `fill="none" stroke="${T}" stroke-width="2.500" stroke-dasharray="6 4"`;
  const arrow = `M0 0v30l7-6 6 12 6-3-6-12h10z`;
  const tools = [
    `<path transform="translate(12 4)" d="${arrow}" fill="${W}"/>`,
    `<ellipse cx="17" cy="16" rx="17" ry="8" transform="rotate(-38 17 16)" ${dash}/><path transform="translate(18 12) scale(.75)" d="${arrow}" fill="${W}"/>`,
    `<ellipse cx="17" cy="26" rx="17" ry="8" transform="rotate(38 17 26)" ${dash}/><path d="M38 6L26 17" stroke="${W}" stroke-width="4" stroke-linecap="round"/><path d="M14 26c4-1 5-8 11-8 3 2 2 8-11 8z" fill="${W}"/>`,
    `<path d="M13 13h17v17H13z" fill="${W}"/><path d="M21 3l6 6H15zM21 39l6-6H15zM1 21l6-6v12zM41 21l-6-6v12z" fill="${T}"/>`,
    `<path d="M21 10l11 11-11 11-11-11z" fill="${W}"/><path d="M21 39A18 18 0 1 1 39 21" fill="none" stroke="${T}" stroke-width="2"/><path d="M34 21h10l-5 6z" fill="${T}"/>`,
    `<path d="M5 4h34v34H21M5 4v18" fill="none" stroke="${T}" stroke-width="2" stroke-dasharray="4 2"/><path d="M4 23h16v15H4z" fill="${W}"/><path d="M15 19h9v9" fill="none" stroke="${T}" stroke-width="2"/>`
  ];
  const cell = (x, y, w, h) => `<path d="M${x + 0.5} ${y + 0.5}h${w - 1}v${h - 1}h${1 - w}z" fill="none" stroke="${W}"/><path d="M${x + w / 2 - 5} ${y + h / 2}h10M${x + w / 2} ${y + h / 2 - 5}v10" stroke="${W}"/>`;
  const layouts = [
    `<path d="M0 0h42v42H0z" fill="${W}"/><path d="M3.500 3.500h35v35h-35z" fill="none" stroke="#333"/><path d="M21 11l6 4-6 4-6-4zM14 17l6 4-6 4-6-4zM28 17l6 4-6 4-6-4zM21 23l6 4-6 4-6-4z" fill="#444"/>`,
    cell(0, 0, 20, 20) + cell(0, 22, 20, 20) + cell(22, 22, 20, 20) + `<path d="M22 0h20v20H22z" fill="${W}"/><path d="M32 6l6 4-6 4-6-4z" fill="#444"/>`,
    cell(0, 0, 20, 42) + `<path d="M22 0h20v42H22z" fill="${W}"/><path d="M32 17l6 4-6 4-6-4z" fill="#444"/>`,
    `<path d="M0 0h42v42H0zM2 2h38v38H2z" fill="none" stroke="#333" stroke-width="1.500"/><path d="M1 1h40v40H1z" fill="none" stroke="${W}"/><path d="M11 10v31M11 17h8M11 26h8M11 35h8M14 8h14M22 17h14M22 26h10M22 35h12" stroke="${W}" stroke-width="1.500"/><path d="M8 5h6v6H8zM17 14h6v6h-6zM17 23h6v6h-6zM17 32h6v6h-6z" fill="${W}" stroke="#333"/>`
  ];

  const frames = 1900;
  const ticks = Array.from({ length: 48 }, (_, i) => i * 40);
  const clips = [
    { name: "Swim Norm", length: 200, color: "#3fa9b5" },
    { name: "Swim Calm", length: 300, color: "#7ff09a" },
    { name: "Float Up", length: 200, color: "#9aeef2" },
    { name: "Dive In", length: 200, color: "#ad97dd" },
    { name: "Turn Left", length: 200, color: "#f39a9a" },
    { name: "Turn Right", length: 200, color: "#f1e366" },
    { name: "Stay", length: 200, color: "#7ff09a" },
    { name: "Death", length: 200, color: "#d683cf" },
    { name: "Eat", length: 200, color: "#3fa9b5" }
  ];

  // UV canvas: 0..1 tile in canvas units
  const x0 = 1321, y0 = 341, tile = 1458, step = tile / 10;
  const gridX = Array.from({ length: 24 }, (_, i) => ({ value: (i - 6) / 10, x: Math.round(x0 + (i - 6) * step) + 0.5 }));
  const gridY = Array.from({ length: 11 }, (_, i) => Math.round(y0 + i * step) + 0.5);

  // Control nets of the UV shells, joined with Catmull-Rom curves
  const parse = (s) => s.trim().split(/\s+/).map((p) => p.split(",").map(Number));
  function along(p, t) {
    const i = Math.min(Math.floor(t), p.length - 2);
    const f = t - i;
    const b = p[i], c = p[i + 1];
    const a = p[i - 1] ?? b, d = p[i + 2] ?? c;
    return [0, 1].map((k) => b[k] + 0.5 * f * (c[k] - a[k] + f * (2 * a[k] - 5 * b[k] + 4 * c[k] - d[k] + f * (3 * (b[k] - c[k]) + d[k] - a[k]))));
  }
  function net({ rows, nu, nv }) {
    const g = rows.map(parse);
    const U = g[0].length - 1, V = g.length - 1;
    const at = (u, v) => along(g.map((r) => along(r, u * U)), v * V).map((n) => n.toFixed(1)).join(" ");
    let d = "";
    for (let i = 0; i <= nu; i++) for (let j = 0; j <= nv; j++) d += (j ? "L" : "M") + at(i / nu, j / nv);
    for (let j = 0; j <= nv; j++) for (let i = 0; i <= nu; i++) d += (i ? "L" : "M") + at(i / nu, j / nv);
    return d;
  }
  const shells = [
    // upper wing
    { nu: 24, nv: 20, rows: [
      "1120,60 1124,58 1127,57 1128,57 1130,57 1132,58 1136,62",
      "1080,115 1102,128 1117,138 1124,140 1131,138 1142,130 1154,110",
      "1045,180 1077,202 1103,212 1114,213 1126,212 1152,203 1178,188",
      "985,268 1035,305 1086,325 1103,328 1120,325 1162,308 1210,268",
      "922,298 1000,375 1070,410 1093,415 1115,412 1175,393 1255,312"] },
    // back, between the two wings
    { nu: 14, nv: 12, rows: [
      "598,530 625,400 680,318 735,400 780,256 865,275 922,298",
      "650,590 690,500 740,450 797,402 870,370 940,370 1000,375",
      "740,690 765,600 815,520 875,470 945,435 1010,430 1070,425",
      "800,778 840,690 890,610 945,560 1000,530 1040,530 1070,530",
      "845,830 870,760 910,705 970,655 1015,650 1045,650 1062,655",
      "875,880 900,820 935,775 980,745 1025,740 1045,750 1058,760",
      "903,935 915,895 940,865 975,846 1016,846 1030,855 1045,860"] },
    // around the mouth
    { nu: 22, nv: 5, rows: [
      "860,930 885,880 915,840 955,815 1000,805 1035,815 1060,830",
      "880,935 900,890 928,855 965,830 1005,825 1025,835 1040,845",
      "903,935 915,900 940,868 975,846 1016,846 1025,850 1035,858"] },
    // spine
    { nu: 7, nv: 14, rows: [
      "1070,410 1093,415 1115,412", "1070,520 1088,525 1107,520", "1062,640 1082,645 1103,640", "1058,740 1079,745 1100,740", "1040,850 1070,830 1105,790"] },
    // left wing, above and below its spine
    { nu: 16, nv: 23, rows: [
      "346,608 346,610 347,611 347,612 346,613 346,614",
      "440,606 445,625 445,640 440,652 432,662 425,672",
      "525,602 535,640 540,675 532,700 522,718 510,732",
      "575,575 605,640 630,710 632,745 628,770 620,790",
      "592,545 630,620 690,705 722,760 740,808 755,850",
      "598,530 650,590 740,690 800,778 860,860 900,935"] },
    { nu: 12, nv: 23, rows: [
      "346,614 346,614 346,613 346,613 346,612 345,611",
      "425,672 415,676 402,680 388,680 370,675 355,660",
      "510,732 490,738 465,742 440,745 410,742 380,725",
      "620,790 585,800 540,808 495,812 450,812 410,800",
      "755,850 700,868 640,872 570,868 500,868 425,870",
      "895,945 800,928 700,920 600,915 500,915 426,905"] },
    // belly
    { nu: 22, nv: 11, rows: [
      "426,905 500,915 600,915 700,920 800,928 895,945",
      "410,990 490,1010 570,1030 680,1000 780,1000 850,985",
      "365,1080 450,1080 550,1080 620,1060 720,1040 787,1058",
      "338,1150 430,1165 520,1165 610,1135 700,1100 795,1100",
      "315,1210 435,1252 500,1238 600,1205 695,1170 790,1175"] },
    { nu: 9, nv: 8, rows: ["565,1040 620,1000 685,950", "575,1090 650,1060 725,1010", "610,1165 670,1110 730,1065"] },
    // lower fins
    { nu: 14, nv: 15, rows: [
      "780,1040 812,1000 850,965 895,945",
      "822,1067 845,1040 868,1015 893,1000",
      "850,1100 866,1085 880,1070 902,1075",
      "876,1122 880,1122 886,1120 896,1115"] },
    { nu: 16, nv: 15, rows: [
      "1035,858 1065,815 1110,785 1158,780",
      "1070,885 1095,860 1125,845 1165,840",
      "1100,920 1118,908 1142,895 1179,895",
      "1145,948 1150,942 1158,935 1174,928"] },
    // right wing
    { nu: 17, nv: 18, rows: [
      "1115,412 1175,393 1255,312 1305,327 1385,316 1480,316",
      "1107,480 1155,460 1215,395 1300,390 1390,400 1485,400",
      "1103,560 1150,540 1220,455 1320,460 1400,460 1470,482",
      "1100,640 1145,600 1240,550 1320,530 1380,530 1430,540",
      "1098,710 1140,660 1220,620 1290,600 1330,610 1370,625",
      "1100,770 1130,730 1185,700 1230,680 1280,690 1300,705",
      "1105,790 1130,780 1162,770 1195,790 1230,800 1257,838"] },
    { nu: 10, nv: 9, rows: ["1145,600 1215,560 1300,530", "1160,660 1240,625 1340,590", "1185,710 1250,690 1335,650"] },
    { nu: 11, nv: 10, rows: [
      "1490,320 1482,370 1478,420 1482,480", "1512,345 1500,380 1500,420 1497,458",
      "1530,375 1523,392 1520,420 1522,456", "1542,420 1540,425 1540,430 1540,440"] },
    // cut in the leading edge
    { nu: 8, nv: 7, rows: [
      "712,357 722,385 742,412 762,400 766,350", "722,350 730,372 745,388 757,380 758,340", "738,335 740,345 745,352 748,345 748,325"] },
    { nu: 8, nv: 2, rows: ["903,935 950,930 980,915 1005,880 1016,850", "897,953 950,966 985,955 1012,920 1032,860"] },
    // tail
    { nu: 5, nv: 18, rows: ["27,1533 30,1533 33,1533", "130,1436 133,1440 136,1444", "230,1328 240,1336 250,1338", "300,1258 310,1275 320,1302"] },
    { nu: 11, nv: 10, rows: [
      "315,1205 360,1215 395,1228 435,1252", "325,1255 352,1262 395,1268 430,1270",
      "352,1280 368,1292 395,1292 412,1300", "372,1315 380,1318 392,1320 403,1316"] }
  ].map(net);

  const bodyOutline = "345,610 375,605 440,606 495,605 525,600 560,582 582,560 598,530 604,500 612,445 625,400 645,355 665,325 680,314 690,322 700,342 712,357 715,340 722,347 732,340 740,336 737,322 748,325 748,290 743,263 755,257 780,255 800,256 830,263 865,275 900,292 922,298 950,293 985,268 1015,232 1045,180 1080,115 1110,72 1122,58 1130,57 1137,67 1150,100 1170,165 1188,220 1205,260 1225,290 1245,307 1270,320 1305,327 1345,322 1385,316 1430,318 1480,316 1492,322 1497,339 1510,333 1512,345 1522,350 1530,370 1519,380 1535,400 1544,425 1540,447 1525,456 1500,458 1487,467 1482,482 1472,478 1430,540 1395,595 1340,660 1290,720 1265,760 1257,795 1253,838 1230,834 1200,820 1180,800 1168,788 1158,792 1160,820 1170,860 1180,905 1175,930 1160,945 1145,949 1125,940 1095,915 1070,885 1050,862 1035,858 1025,900 1005,940 980,960 950,966 915,960 895,953 893,985 898,1040 904,1080 900,1110 888,1127 875,1122 850,1100 822,1067 800,1055 787,1060 795,1085 795,1120 790,1175 760,1168 730,1164 695,1170 640,1190 560,1220 500,1238 435,1252 433,1270 415,1266 412,1300 403,1316 388,1322 372,1315 362,1298 352,1280 347,1290 330,1272 320,1302 303,1295 280,1310 250,1338 136,1444 35,1533 27,1533 130,1436 230,1328 262,1290 300,1258 302,1245 325,1250 325,1220 315,1210 335,1160 365,1080 410,990 425,930 425,870 410,800 380,725 355,660";
  const mouth = "903,935 915,900 940,868 975,846 1016,846 1017,858 1005,880 980,915 950,930";
  const bodyPath = `M${bodyOutline}ZM${mouth}Z`;

  const bowRows = [
    "115,280 154,303 197,315 228,318 262,316 305,311 343,299",
    "115,341 148,348 181,383 224,387 265,390 298,363 337,358",
    "121,423 150,432 184,441 222,442 258,446 290,440 324,438",
    "144,504 165,503 190,500 218,502 247,505 270,512 295,515",
    "182,573 190,560 200,556 217,553 232,556 243,562 250,573",
    "150,637 170,640 195,652 218,655 240,652 265,642 291,637",
    "122,713 150,711 190,708 220,710 255,705 285,706 316,705",
    "108,780 140,765 180,757 218,757 260,757 300,765 335,772",
    "92,850 125,836 175,838 217,842 260,838 305,828 354,837"
  ];
  const bow = [
    { rows: bowRows, nu: 6, nv: 8 },
    { rows: ["160,545 200,540 217,543 235,540 268,545", "182,573 200,570 217,573 235,570 250,573", "168,600 200,607 217,610 240,607 268,600"], nu: 6, nv: 4 },
    { rows: ["121,423 127,423", "144,504 152,504", "182,573 186,573", "150,637 156,640", "122,713 132,713", "92,850 108,845"], nu: 2, nv: 10 },
    { rows: ["324,438 318,438", "295,515 287,515", "250,573 246,573", "291,637 285,640", "316,705 308,708", "354,837 340,835"], nu: 2, nv: 10 }
  ].map(net).join("");
  const bowOutline = "M115,280 154,303 197,315 228,318 262,316 305,311 343,299 337,358 324,438 295,515 250,573 291,637 316,705 354,837 305,828 260,838 217,842 175,838 125,836 92,850 122,713 150,637 182,573 144,504 121,423 115,341Z";

  const tileText = [
    { y: 1029, chars: [["U", 1688], ["1", 1897], ["V", 2062], ["1", 2262]] },
    { y: 1285, chars: [["1", 1716], ["0", 1894], ["0", 2075], ["1", 2262]] }
  ];

  let tool = $state(0);
  let shelfTab = $state("RIG");
  let command = $state("");
</script>

{#snippet icon(name)}
  <svg class="icon" viewBox="0 0 28 28" aria-hidden="true">{@html icons[name]}</svg>
{/snippet}

{#snippet buttons(names, active = [])}
  {#each names as name}
    <button class="tool" class:active={active.includes(name)} aria-label={name}>{@render icon(name)}</button>
  {/each}
{/snippet}

{#snippet combo(label, value, cls)}
  <span class="combo {cls}">
    <select aria-label={label}><option>{value}</option></select>
    <svg viewBox="0 0 16 10" aria-hidden="true"><path d="M1 1h14L8 9z" fill="#d0d0d0" /></svg>
  </span>
{/snippet}

<div class="maya">
  <div class="letterbox"></div>

  <nav class="menubar">
    {#each menus as item}<button class="menu">{item}</button>{/each}
    <span class="grow"></span>
    <span class="label">Workspace :</span>
    {@render combo("Workspace", "Mike*", "workspace")}
    {@render buttons(["lock"])}
  </nav>

  <div class="status">
    <i class="grip"></i>
    {@render combo("Menu set", "Animation", "mode")}
    <i class="bar"></i>
    {@render buttons(statusFile)}
    <i class="chev"></i>
    <i class="bar"></i>
    {@render buttons(statusMode, ["selComp"])}
    <i class="bar"></i>
    <i class="down"></i>
    {@render buttons(statusMask, ["maskLine"])}
    <i class="bar"></i>
    {@render buttons(statusSnap)}
    <i class="down"></i>
    <button class="readout">No Live Surface</button>
    <i class="bar"></i>
    <i class="down"></i>
    <button class="readout">Symmetry: Off</button>
    <i class="chev"></i>
    <i class="bar"></i>
    {@render buttons(statusRender)}
    <i class="bar"></i>
    <span class="lead">{@render buttons(["rename"])}</span>
    <input class="quick" aria-label="Quick rename" />
    <i class="bar"></i>
    <button class="signin">
      <svg viewBox="0 0 20 26" aria-hidden="true"><ellipse cx="10" cy="8" rx="5" ry="7" fill="#fff" stroke="#222" stroke-width="1.500" /><path d="M1 25c0-7 5-8 9-10 4 2 9 3 9 10z" fill="#fff" stroke="#222" stroke-width="1.500" /></svg>
      <span>Sign In</span>
      <svg class="caret" viewBox="0 0 16 10" aria-hidden="true"><path d="M1 1h14L8 9z" fill="#fff" /></svg>
    </button>
    <span class="grow"></span>
    {@render buttons(sidebarIcons)}
  </div>

  <div class="shelf">
    <i class="grip"></i>
    <div class="shelf-side">
      <svg viewBox="0 0 14 14" aria-hidden="true"><path d="M1 3h12M1 7h12M1 11h12" stroke="#bbb" stroke-width="2" /></svg>
      <svg viewBox="0 0 14 14" aria-hidden="true"><circle cx="7" cy="7" r="3.500" fill="none" stroke="#bbb" stroke-width="1.500" /><circle cx="7" cy="7" r="5.500" fill="none" stroke="#bbb" stroke-width="2" stroke-dasharray="2 2.300" /></svg>
    </div>
    <div class="shelf-main">
      <div class="tabs">
        {#each shelfTabs as tab}
          <button class="tab" class:on={tab === shelfTab} onclick={() => (shelfTab = tab)}>{tab}</button>
        {/each}
      </div>
      <div class="shelf-row">
        {#each shelf as [name, label, color, bg, tileBg]}
          <button class="shelf-item" style:background={tileBg} aria-label={label || name}>
            <svg class:short={label} viewBox={label ? "4 0 40 46" : "0 0 48 48"} aria-hidden="true">{@html art[name]}</svg>
            {#if label}<span style:color={color} style:background={bg}>{label}</span>{/if}
          </button>
        {/each}
        <i class="rule"></i><i class="rule"></i>
        <span class="grow"></span>
        <span class="shelf-scroll"><i class="up"></i><b></b><i class="dn"></i></span>
      </div>
    </div>
  </div>

  <main>
    <aside class="toolbox">
      <i class="dots"></i>
      {#each tools as t, i}
        <button class="big" class:active={tool === i} onclick={() => (tool = i)} aria-label="Tool {i + 1}">
          <svg viewBox="0 0 42 42">{@html t}</svg>
        </button>
      {/each}
      <hr />
      {#each layouts as l, i}
        <button class="big" class:active={i === 3} aria-label="Layout {i + 1}">
          <svg viewBox="0 0 42 42">{@html l}</svg>
        </button>
      {/each}
      <span class="grow"></span>
      <svg class="logo" viewBox="0 0 50 48" aria-hidden="true">
        <path d="M1 1l12 2v44H1z" fill="#0a8489" /><path d="M37 3l12-2v46H37z" fill="#1a9a9e" /><path d="M37 3l12-2L31 38h-7z" fill="#27b9bd" />
        <path d="M1 1l12 1 14 36h-7z" fill="#8fc7cb" /><path d="M1 6l12 41H1z" fill="#12a7ab" /><path d="M49 8v39l-12-4z" fill="#067c80" />
      </svg>
    </aside>

    <section class="outliner">
      <div class="panel-tabs"><span>Outliner</span></div>
      <div class="panel-menu">
        {#each ["Display", "Show", "Help"] as item}<button class="menu">{item}</button>{/each}
      </div>
      <div class="search">
        <svg viewBox="0 0 22 20" aria-hidden="true"><path d="M4 5v11M18 5v11M6 2h8M8 18h6" fill="none" stroke="#8a8a8a" stroke-width="1.500" /><path d="M0 0l6 3-6 4zM15 0l6 3-6 4zM0 13l6 3-6 4zM15 13l6 3-6 4z" fill="#8a8a8a" /></svg>
        <input placeholder="Search..." aria-label="Search outliner" />
        <svg class="caret" viewBox="0 0 16 10" aria-hidden="true"><path d="M1 1h14L8 9z" fill="#d0d0d0" /></svg>
      </div>
      <div class="tree-wrap">
        <ul class="tree">
          {#each tree as node}
            <li class={node.state} class:dim={node.dim}>
              {#if node.depth}
                <svg class="branch" class:deep={node.depth === 2} viewBox="0 0 18 30" aria-hidden="true"><path d={node.depth === 2 ? "M5.500 0v15.500h16" : node.last ? "M5.500 0v15.500h10" : "M5.500 0v30M5.500 15.500h10"} fill="none" stroke="#8a8a8a" />{#if node.depth === 2}<circle cx="22" cy="15.500" r="2.500" fill="#a09c98" />{/if}</svg>
              {/if}
              <i class="box" class:none={!node.box}>
                {#if node.box}<svg viewBox="0 0 13 13"><path d="M.5.5h12v12H.5zM2.500 6.500h8{node.box === '+' ? 'M6.500 2.500v8' : ''}" fill="none" stroke="#9a9a9a" /></svg>{/if}
              </i>
              <svg class="node" viewBox="0 0 24 24" aria-hidden="true">{@html node.icon}</svg>
              <span>{node.name}</span>
            </li>
          {/each}
        </ul>
        <div class="vscroll"><i class="up"></i><b></b><i class="dn"></i></div>
      </div>
      <div class="hscroll"><i class="lf"></i><b></b><i class="rt"></i></div>
      <i class="sizer"></i>
    </section>

    <div class="center">
      <section class="uv">
        <div class="panel-menu">
          {#each uvMenus as item}<button class="menu">{item}</button>{/each}
        </div>
        <div class="uv-tools">
          {@render buttons(["uvWire", "uvShade", "uvDist"], ["uvWire"])}
          <i class="thin"></i>
          {@render buttons(["uvIso", "uvDim"], ["uvIso"])}
          <i class="thin"></i>
          {@render buttons(["uvGrid", "uvIsolate"], ["uvGrid"])}
          <i class="thin"></i>
          {@render buttons(["camera"])}
          <span class="grow"></span>
          {@render buttons(["image", "checker"], ["image", "checker"])}
          <i class="down"></i>
          <span class="texture">TX_MantaRay_Base_col</span>
          {@render buttons(["rgb", "imageDim"], ["imageDim"])}
          <input class="dimmer" type="range" value="97" aria-label="Image dim" />
          <i class="bar"></i>
          {@render buttons(["pixelSnap", "imageFrame", "uvMagnet", "bake", "psd"], ["pixelSnap", "imageFrame"])}
          <i class="bar"></i>
          {@render buttons(["aperture"])}
          <input class="num" value="0.00" aria-label="Exposure" />
          {@render buttons(["contrast"])}
          <input class="num" value="1.00" aria-label="Gamma" />
          <span class="lead">{@render buttons(["on"], ["on"])}</span>
          {@render combo("View transform", "sRGB gamma", "gamma")}
        </div>
        <div class="canvas">
          <svg viewBox="459 304 3349 1517" preserveAspectRatio="xMidYMid slice">
            <defs>
              <pattern id="cells" x={x0} y={y0} width={tile / 32} height={tile / 32} patternUnits="userSpaceOnUse">
                <rect width={tile / 64} height={tile / 64} fill="#fff" />
                <rect x={tile / 64} y={tile / 64} width={tile / 64} height={tile / 64} fill="#fff" />
              </pattern>
              <mask id="darkCells" maskUnits="userSpaceOnUse" x={x0} y={y0} width={tile} height={tile}>
                <rect x={x0} y={y0} width={tile} height={tile} fill="url(#cells)" />
              </mask>
              <radialGradient id="light" cx="0" cy="1" r="1.200">
                <stop offset="0" stop-color="#2b2b2b" />
                <stop offset=".3" stop-color="#333" />
                <stop offset="1" stop-color="#3f3f3f" />
              </radialGradient>
              <radialGradient id="dark" cx="0" cy="1" r="1.200">
                <stop offset="0" stop-color="#000" />
                <stop offset=".15" stop-color="#060606" />
                <stop offset=".5" stop-color="#171717" />
                <stop offset="1" stop-color="#272727" />
              </radialGradient>
              <clipPath id="body"><path d={bodyPath} clip-rule="evenodd" /></clipPath>
            </defs>
            <rect x="0" y="0" width="4200" height="2200" fill="#5c5c5c" />
            <g stroke="#535353">
              {#each gridX as g}<path d="M{g.x} 0V2200" />{/each}
              {#each gridY as y}<path d="M0 {y}H4200" />{/each}
            </g>
            <rect x={x0} y={y0} width={tile} height={tile} fill="url(#light)" />
            <rect x={x0} y={y0} width={tile} height={tile} fill="url(#dark)" mask="url(#darkCells)" />
            <g class="tile-text">
              {#each tileText as line}
                {#each line.chars as [ch, x]}<text {x} y={line.y}>{ch}</text>{/each}
              {/each}
            </g>
            <g stroke="#6a6a6a" stroke-opacity=".75">
              {#each gridX.slice(7, 16) as g}<path d="M{g.x} {y0}v{tile}" />{/each}
              {#each gridY.slice(1, 10) as y}<path d="M{x0} {y}h{tile}" />{/each}
            </g>
            <path d="M0 {y0}H4200M0 {y0 + tile}H4200M{x0} 0V2200M{x0 + tile} 0V2200" stroke="#000" stroke-width="1.500" />
            <path d="M{x0} {y0 + tile}v{-tile / 2}" stroke="#1fe01f" stroke-width="2" />
            <path d="M{x0} {y0}v{tile / 2}" stroke="#1414e0" stroke-width="2" />
            <path d="M{x0} {y0 + tile}h{tile / 2}" stroke="#e01414" stroke-width="2" />
            <path d="M{x0 + tile / 2} {y0 + tile}h{tile / 2}" stroke="#1414c8" stroke-width="2" />
            <g class="axis-text">
              {#each gridX as g}
                {#if g.value < 0 || g.value >= 1}<text x={g.x + 1} y="1794">{g.value}</text>{/if}
              {/each}
              <text x={x0 + 2} y="337">1</text>
            </g>
            <g class="shells" transform="translate(1300 680) scale(.95663 .72704)">
              <g clip-path="url(#body)">
                {#each shells as d}<path {d} />{/each}
              </g>
              <path d={bow} />
              <path class="edge" d={bodyPath} />
              <path class="edge" d={bowOutline} />
            </g>
          </svg>
          <span class="stats">(0/2) UV shells, (0/0) overlapping UVs, (0/0) reversed UVs</span>
        </div>
      </section>

      <div class="bot">
        <i class="grip"></i>
        <svg class="bot-logo" viewBox="8 2 32 44" aria-hidden="true">{@html animbot}</svg>
        <div class="bot-tools">
          {@render buttons(["keyPrev", "keyNext"])}
          <input class="nudge" value="10" aria-label="Nudge frames" />
          <span class="pad">{@render buttons(["power"])}</span>
          {#each sliders as s}
            <div class="blend {s.tone}">
              <b></b><i></i><i></i><i></i><i></i>
              <button>{s.name}</button>
              <i></i><i></i><i></i><i></i><b></b>
            </div>
          {/each}
          {#each botGroups as group}
            <span class="group">{@render buttons(group)}</span>
          {/each}
        </div>
      </div>
    </div>

    <aside class="side-tabs">
      <button>Channel Box / Layer Editor</button>
      <button>Attribute Editor</button>
    </aside>
  </main>

  <div class="time">
    <i class="grip"></i>
    <div class="ruler">
      <div class="scale">
        {#each ticks as t}
          <span class="tick" style:left="{(t / frames) * 100}%">{t}</span>
        {/each}
        <span class="now">1</span>
        <div class="clips">
          {#each clips as c}
            <div style:flex-grow={c.length} style:border-color={c.color}><span style:background={c.color}>{c.name}</span></div>
          {/each}
        </div>
      </div>
    </div>
    <input class="frame" value="1" aria-label="Current frame" />
    <div class="play">{@render buttons(playback)}</div>
  </div>

  <div class="range">
    <i class="grip"></i>
    <input class="field" value="1" aria-label="Animation start" />
    <input class="field" value="1" aria-label="Playback start" />
    <div class="range-track">
      <div><b></b><span>1</span><span class="grow"></span><span>1900</span><b></b></div>
    </div>
    <input class="field" value="1900" aria-label="Playback end" />
    <input class="field" value="1900" aria-label="Animation end" />
    <i class="bar"></i>
    {@render buttons(["bookmark"])}
    <i class="bar"></i>
    <i class="down"></i>
    <button class="readout">No Character Set</button>
    <button class="layer-btn" aria-label="Animation layer"><svg viewBox="0 0 20 20"><path d="M1 3h18l-9 14z" fill="#777" stroke="#1c3a1c" stroke-width="1.500" /></svg></button>
    <button class="readout">BaseAnimation</button>
    <i class="bar"></i>
    {@render combo("Frame rate", "30 fps", "fps")}
    <span class="lead">{@render buttons(["loop", "cache"], ["cache"])}</span>
    <i class="bar"></i>
    {@render buttons(["sound"])}
    <button class="tool rec" aria-label="Auto keyframe">{@render icon("autoKey")}</button>
    <span class="pad">{@render buttons(["prefs"])}</span>
  </div>

  <div class="command">
    <i class="grip"></i>
    <label for="mel">MEL</label>
    <input id="mel" bind:value={command} />
    <i class="split"></i>
    <input class="result" readonly aria-label="Command result" />
    <span class="lead">{@render buttons(["script"])}</span>
  </div>

  <footer>
    <i class="grip"></i>
    <span>Select UV Tool: No help available for this tool</span>
  </footer>
</div>

<style>
  :global(body) {
    background: #2b2b2b;
  }
  .maya {
    display: flex;
    flex-direction: column;
    box-sizing: border-box;
    min-height: 100vh;
    padding-bottom: 60px;
    background: linear-gradient(#2b2b2b, #2b2b2b) bottom / 100% 60px no-repeat #383838;
    color: #cfcfcf;
    font: 15px/20px "Noto Sans", sans-serif;
  }
  .maya :global(*) {
    box-sizing: border-box;
  }
  button, input, select {
    margin: 0;
    padding: 0;
    border: 0;
    background: none;
    color: inherit;
    font: inherit;
  }
  i, b {
    flex: none;
  }
  .letterbox {
    height: 34px;
    background: #2b2b2b;
  }
  .grow {
    flex: 1;
  }
  .menubar, .status, .shelf, .time, .range, .command, footer {
    display: flex;
    align-items: center;
    background: #444;
  }
  .menubar {
    height: 36px;
    padding-bottom: 4px;
    padding-left: 2px;
  }
  .menu {
    padding: 0 13px;
    white-space: nowrap;
  }
  .menubar .label {
    padding-right: 8px;
  }
  .menubar .label, .menubar .combo, .menubar .tool {
    align-self: end;
  }
  .menubar .combo {
    margin-bottom: -2px;
  }
  .menubar .tool {
    height: 28px;
    margin-left: 13px;
    margin-right: 3px;
  }
  .menubar .tool .icon {
    width: 24px;
    height: 24px;
  }

  /* small shared pieces */
  .icon {
    display: block;
    width: 28px;
    height: 28px;
  }
  .tool {
    display: flex;
    flex: none;
    align-items: center;
    justify-content: center;
    width: 34px;
    height: 34px;
    margin-right: 1px;
    border-radius: 2px;
  }
  .active {
    background: #5285a6;
  }
  .grip {
    align-self: stretch;
    width: 7px;
    margin: 4px 12px 4px 4px;
    border: dotted #8a8a8a;
    border-width: 0 1px;
  }
  .bar {
    width: 5px;
    height: 32px;
    margin: 0 14px;
    background: linear-gradient(#777, #777) center / 5px 20px no-repeat, linear-gradient(#777, #777) center / 1px 32px no-repeat;
  }
  .down {
    width: 0;
    margin: 0 10px 0 0;
    border: 5px solid transparent;
    border-top: 7px solid #8a8a8a;
    border-bottom: 0;
  }
  .chev {
    width: 6px;
    height: 16px;
    margin: 0 10px 0 12px;
    background: #777;
    clip-path: polygon(0 0, 100% 50%, 0 100%);
  }
  .lead {
    margin-left: 8px;
  }
  .combo {
    position: relative;
    display: flex;
    height: 32px;
    background: #5d5d5d;
  }
  .combo select {
    width: 100%;
    padding: 0 6px;
    appearance: none;
  }
  .combo svg {
    position: absolute;
    right: 6px;
    top: 50%;
    width: 14px;
    height: 9px;
    margin-top: -5px;
    pointer-events: none;
  }
  .mode {
    width: 149px;
  }
  .workspace {
    width: 255px;
    height: 26px;
  }
  .gamma {
    width: 215px;
  }
  .fps {
    width: 124px;
    height: 26px;
  }
  .readout {
    width: 150px;
    height: 34px;
    padding-left: 9px;
    border: 1px solid #3a3a3a;
    text-align: left;
    white-space: nowrap;
  }

  .status {
    height: 42px;
    margin-bottom: 2px;
  }
  .status .grip {
    margin-right: 8px;
  }
  .status .mode {
    margin-right: -3px;
  }
  .quick {
    width: 252px;
    height: 30px;
    background: #2b2b2b;
    border-radius: 2px;
  }
  .signin {
    display: flex;
    align-items: center;
    gap: 6px;
    width: 180px;
    height: 32px;
    margin-left: 4px;
    padding: 0 4px;
    background: #5d5d5d;
  }
  .signin svg {
    width: 20px;
    height: 25px;
  }
  .signin .caret {
    width: 14px;
    height: 9px;
    margin-left: auto;
  }

  /* shelf */
  .shelf {
    align-items: stretch;
    height: 101px;
    margin-bottom: 5px;
    border-top: 4px solid #444;
  }
  .shelf .grip {
    margin-right: 11px;
  }
  .shelf-side {
    display: flex;
    flex-direction: column;
    justify-content: space-around;
    align-items: center;
    width: 30px;
    margin-bottom: 4px;
    background: #383838;
  }
  .shelf-side svg {
    width: 14px;
  }
  .shelf-main {
    flex: 1;
    margin: 0 4px 0 6px;
  }
  .tabs {
    display: flex;
    gap: 2px;
    height: 26px;
    background: #383838;
  }
  .tab {
    padding: 3px 17px 0;
    border: 1px solid #303030;
    border-bottom: 0;
    background: #3d3d3d;
    color: #9a9a9a;
    line-height: 20px;
  }
  .tab.on {
    border-color: #444;
    background: #444;
    color: #e6e6e6;
  }
  .shelf-row {
    display: flex;
    height: 66px;
    padding: 6px 7px 8px 6px;
  }
  .shelf-item {
    display: flex;
    flex: none;
    flex-direction: column;
    align-items: center;
    justify-content: center;
    width: 53px;
    height: 52px;
    overflow: hidden;
  }
  .shelf-item svg {
    width: 48px;
    height: 48px;
  }
  .shelf-item svg.short {
    width: 32px;
    height: 28px;
  }
  .shelf-item span {
    width: 48px;
    height: 18px;
    overflow: hidden;
    border-radius: 3px;
    background: #262626;
    color: #eee;
    font-size: 12px;
    font-weight: 700;
    line-height: 18px;
    white-space: nowrap;
  }
  .rule {
    width: 2px;
    margin-left: 8px;
    margin-right: 8px;
    background: #777;
  }
  .shelf-scroll, .vscroll {
    display: flex;
    flex-direction: column;
    align-items: center;
    justify-content: space-between;
    gap: 4px;
    width: 18px;
    padding: 4px 0;
    background: #353535;
  }
  .shelf-scroll b, .vscroll b {
    flex: 1;
    width: 16px;
    border-radius: 7px;
    background: #5d5d5d;
  }
  .up, .dn {
    border: 7px solid transparent;
    border-top: 0;
    border-bottom: 8px solid #c6c6c6;
  }
  .dn {
    border-bottom: 0;
    border-top: 8px solid #c6c6c6;
  }

  main {
    display: flex;
    flex: 1;
  }
  .toolbox {
    display: flex;
    flex-direction: column;
    align-items: center;
    width: 66px;
    margin-right: 4px;
    background: #444;
  }
  .dots {
    width: 64px;
    height: 6px;
    margin: 3px 0 8px;
    border: dotted #8a8a8a;
    border-width: 2px 0;
  }
  .big {
    display: flex;
    align-items: center;
    justify-content: center;
    width: 54px;
    height: 54px;
    margin-bottom: 1px;
    border-radius: 2px;
  }
  .big svg {
    width: 42px;
    height: 42px;
  }
  .toolbox hr {
    width: 54px;
    height: 2px;
    margin: 117px 0 8px;
    border: 0;
    background: #999;
  }
  .logo {
    width: 50px;
    height: 48px;
    margin-bottom: 8px;
  }

  /* outliner */
  .outliner {
    display: flex;
    flex-direction: column;
    width: 380px;
    margin-right: 7px;
    padding: 0 2px 0 4px;
    background: #444;
  }
  .panel-tabs {
    height: 26px;
    margin: 0 -2px 0 -4px;
    background: #383838;
  }
  .panel-tabs span {
    display: inline-block;
    height: 26px;
    padding: 0 16px 0 18px;
    background: #444;
    color: #eee;
    line-height: 28px;
  }
  .panel-menu {
    display: flex;
    align-items: center;
    height: 34px;
  }
  .search {
    position: relative;
    display: flex;
    align-items: center;
    gap: 10px;
    height: 30px;
    margin: 4px 0;
    padding-left: 8px;
  }
  .search svg {
    width: 23px;
    height: 22px;
  }
  .search input {
    flex: 1;
    height: 30px;
    padding-left: 5px;
    background: #2b2b2b;
  }
  .search input::placeholder {
    color: #8a8a8a;
  }
  .search .caret {
    position: absolute;
    right: 4px;
    width: 15px;
    height: 9px;
  }
  .tree-wrap {
    display: flex;
    flex: 1;
    background: #373737;
  }
  .tree {
    flex: 1;
    margin: 0;
    padding: 0;
    list-style: none;
  }
  .tree li {
    display: flex;
    align-items: center;
    height: 30px;
    padding-left: 32px;
  }
  .tree li.dim {
    color: #6c6c6c;
  }
  .tree li.parent {
    background: #434e5b;
  }
  .tree li.selected {
    background: #5285a6;
    color: #fff;
  }
  .branch {
    width: 18px;
    height: 30px;
    overflow: visible;
  }
  .branch.deep {
    margin: 0 -2px 0 18px;
  }
  .box {
    width: 13px;
    height: 13px;
    margin-right: 7px;
    line-height: 0;
  }
  .node {
    width: 24px;
    height: 24px;
    margin-right: 4px;
  }
  .vscroll {
    margin-left: 1px;
  }
  .hscroll {
    display: flex;
    align-items: center;
    gap: 6px;
    height: 18px;
    padding: 0 24px 0 4px;
    background: #373737;
  }
  .hscroll b {
    flex: 1;
    height: 16px;
    border-radius: 7px;
    background: #5d5d5d;
  }
  .lf, .rt {
    border: 7px solid transparent;
    border-left: 0;
    border-right: 8px solid #c6c6c6;
  }
  .rt {
    border-right: 0;
    border-left: 8px solid #c6c6c6;
  }
  .sizer {
    align-self: center;
    width: 124px;
    margin: 4px 0 10px;
    border-top: 3px dotted #777;
  }

  /* UV editor */
  .center {
    display: flex;
    flex: 1;
    flex-direction: column;
    min-width: 0;
  }
  .uv {
    display: flex;
    flex: 1;
    flex-direction: column;
    border: 2px solid #858585;
    border-width: 2px 1px 1px 2px;
    background: #444;
  }
  .uv .panel-menu {
    height: 34px;
    padding-left: 1px;
  }
  .uv-tools {
    display: flex;
    align-items: center;
    height: 47px;
    padding: 0 8px 0 7px;
  }
  .thin {
    width: 2px;
    height: 32px;
    margin: 0 5px;
    background: #3a3a3a;
  }
  .uv-tools .down {
    margin-left: 6px;
  }
  .uv-tools .bar {
    margin: 0 6px 0 9px;
  }
  .texture {
    width: 181px;
    padding-left: 8px;
    overflow: hidden;
    white-space: nowrap;
  }
  .dimmer {
    width: 84px;
    height: 22px;
    appearance: none;
  }
  .dimmer::-webkit-slider-runnable-track {
    height: 8px;
    border-radius: 4px;
    background: #2b2b2b;
  }
  .dimmer::-webkit-slider-thumb {
    width: 10px;
    height: 22px;
    margin-top: -7px;
    border-radius: 3px;
    background: #c6c6c6;
    appearance: none;
  }
  .num {
    width: 88px;
    height: 32px;
    padding-left: 9px;
    border-radius: 2px;
    background: #2b2b2b;
  }
  .canvas {
    position: relative;
    flex: 1;
    min-height: 600px;
  }
  .canvas > svg {
    position: absolute;
    width: 100%;
    height: 100%;
  }
  .tile-text text {
    fill: none;
    stroke: #000;
    stroke-width: 6px;
    stroke-linejoin: round;
    font: 600 240px "Open Sans", sans-serif;
  }
  .axis-text text {
    fill: #3c3c3c;
    font: 16px "Liberation Sans", sans-serif;
  }
  .shells path {
    fill: none;
    stroke: #5ad0ec;
    stroke-width: 1px;
    vector-effect: non-scaling-stroke;
  }
  .shells .edge {
    stroke: #fff;
    stroke-width: 2px;
  }
  .stats {
    position: absolute;
    right: 5px;
    bottom: 3px;
    color: #fff;
    font: 700 16px/20px "Liberation Sans", sans-serif;
  }

  .bot {
    display: flex;
    align-items: center;
    height: 64px;
    margin: 7px 0 5px;
    padding-top: 2px;
    background: #444;
  }
  .bot .grip {
    margin-right: 22px;
    margin-left: 2px;
  }
  .bot-logo {
    width: 27px;
    height: 34px;
  }
  .bot-tools {
    display: flex;
    flex: 1;
    align-items: center;
    justify-content: center;
    padding-left: 12px;
  }
  .nudge {
    width: 66px;
    height: 36px;
    padding-left: 7px;
    border-radius: 3px;
    background: #2b2b2b;
  }
  .pad {
    margin: 0 8px 0 9px;
  }
  .blend {
    display: flex;
    align-items: center;
    justify-content: space-between;
    width: 295px;
    height: 14px;
    margin-right: 26px;
    padding: 0 10px;
    border-radius: 6px;
    background: #3a3a3a;
    color: #4ba057;
  }
  .blend.yellow {
    color: #c4b21c;
  }
  .blend b {
    width: 9px;
    height: 9px;
    background: currentColor;
  }
  .blend i {
    width: 3px;
    height: 3px;
    background: currentColor;
  }
  .blend button {
    width: 38px;
    height: 36px;
    border: 2px solid #383838;
    border-radius: 7px;
    background: #444;
  }
  .group {
    display: flex;
    gap: 3px;
    margin-right: 21px;
  }

  .side-tabs {
    display: flex;
    flex-direction: column;
    width: 24px;
    margin-left: 7px;
  }
  .side-tabs button {
    height: 222px;
    border: 1px solid #2e2e2e;
    color: #9a9a9a;
    text-align: center;
    writing-mode: vertical-rl;
    transform: rotate(180deg);
    white-space: nowrap;
  }
  .side-tabs button + button {
    height: 142px;
  }

  /* time slider */
  .time {
    height: 58px;
    margin-bottom: 4px;
  }
  .time .grip, .range .grip, .command .grip {
    margin-right: 8px;
  }
  .ruler {
    flex: 1;
    height: 46px;
    padding: 0 18px 0 16px;
    background: #2b2b2b;
  }
  .scale {
    position: relative;
    height: 46px;
  }
  .tick {
    position: absolute;
    top: 0;
    height: 40px;
    color: #8a8a8a;
    line-height: 19px;
  }
  .tick::before {
    content: "";
    position: absolute;
    left: -1px;
    top: 21px;
    width: 2px;
    height: 19px;
    background: #8a8a8a;
  }
  .now {
    position: absolute;
    left: 3px;
    top: 19px;
    color: #f5dcc0;
  }
  .clips {
    position: absolute;
    inset: 24px 0 0;
    display: flex;
  }
  .clips div {
    flex-basis: 0;
    border-bottom: 4px solid;
    line-height: 18px;
    text-align: center;
  }
  .clips span {
    display: inline-block;
    height: 18px;
    padding: 0 2px;
    border-radius: 3px 3px 0 0;
    color: #444;
  }
  .frame, .field {
    width: 134px;
    height: 30px;
    padding-left: 11px;
    border-radius: 2px;
    background: #2b2b2b;
  }
  .frame {
    margin: 0 10px 0 12px;
  }
  .play {
    display: flex;
    padding-right: 8px;
  }

  .range {
    height: 51px;
    margin-bottom: 4px;
  }
  .field {
    height: 38px;
    margin-right: 12px;
  }
  .range .bar {
    margin: 0 14px;
  }
  .range .readout {
    width: 154px;
  }
  .range-track {
    flex: 1;
    height: 38px;
    margin-right: 12px;
    padding: 4px 12px;
    background: #383838;
  }
  .range-track div {
    display: flex;
    align-items: center;
    height: 29px;
    padding: 0 7px 0 5px;
    border-radius: 3px;
    background: #5d5d5d;
  }
  .range-track b {
    width: 21px;
    height: 21px;
    margin: 0 8px 0 0;
    border-radius: 3px;
    background: #909090;
  }
  .range-track b:last-child {
    margin: 0 0 0 8px;
  }
  .range .down {
    margin: 0 12px;
  }
  .range .field + .bar {
    margin-left: -7px;
  }
  .layer-btn {
    width: 27px;
    height: 27px;
    margin: 0 4px 0 12px;
    border: 1px solid #1b1b1b;
    border-radius: 4px;
    background: #1fa82c;
  }
  .layer-btn svg {
    display: block;
    width: 18px;
    margin: auto;
  }
  .range .lead {
    display: flex;
    gap: 10px;
    margin-left: 14px;
  }
  .range .pad {
    margin: 0 8px 0 12px;
  }
  .rec {
    margin-left: 10px;
    background: #cf2f35;
  }

  .command {
    height: 48px;
    margin-bottom: 4px;
  }
  .command label {
    width: 70px;
    padding-left: 17px;
    color: #eee;
  }
  .command input {
    flex: 1;
    height: 35px;
    padding: 0 8px;
    border-radius: 2px;
    background: #2b2b2b;
  }
  .command .lead {
    margin: 0 8px 0 5px;
  }
  .split {
    width: 13px;
    height: 8px;
    background: radial-gradient(circle, #8a8a8a 1px, transparent 2px) center / 4px 6px repeat-y;
  }

  footer {
    height: 34px;
  }
  footer .grip {
    margin-right: 20px;
  }
</style>
